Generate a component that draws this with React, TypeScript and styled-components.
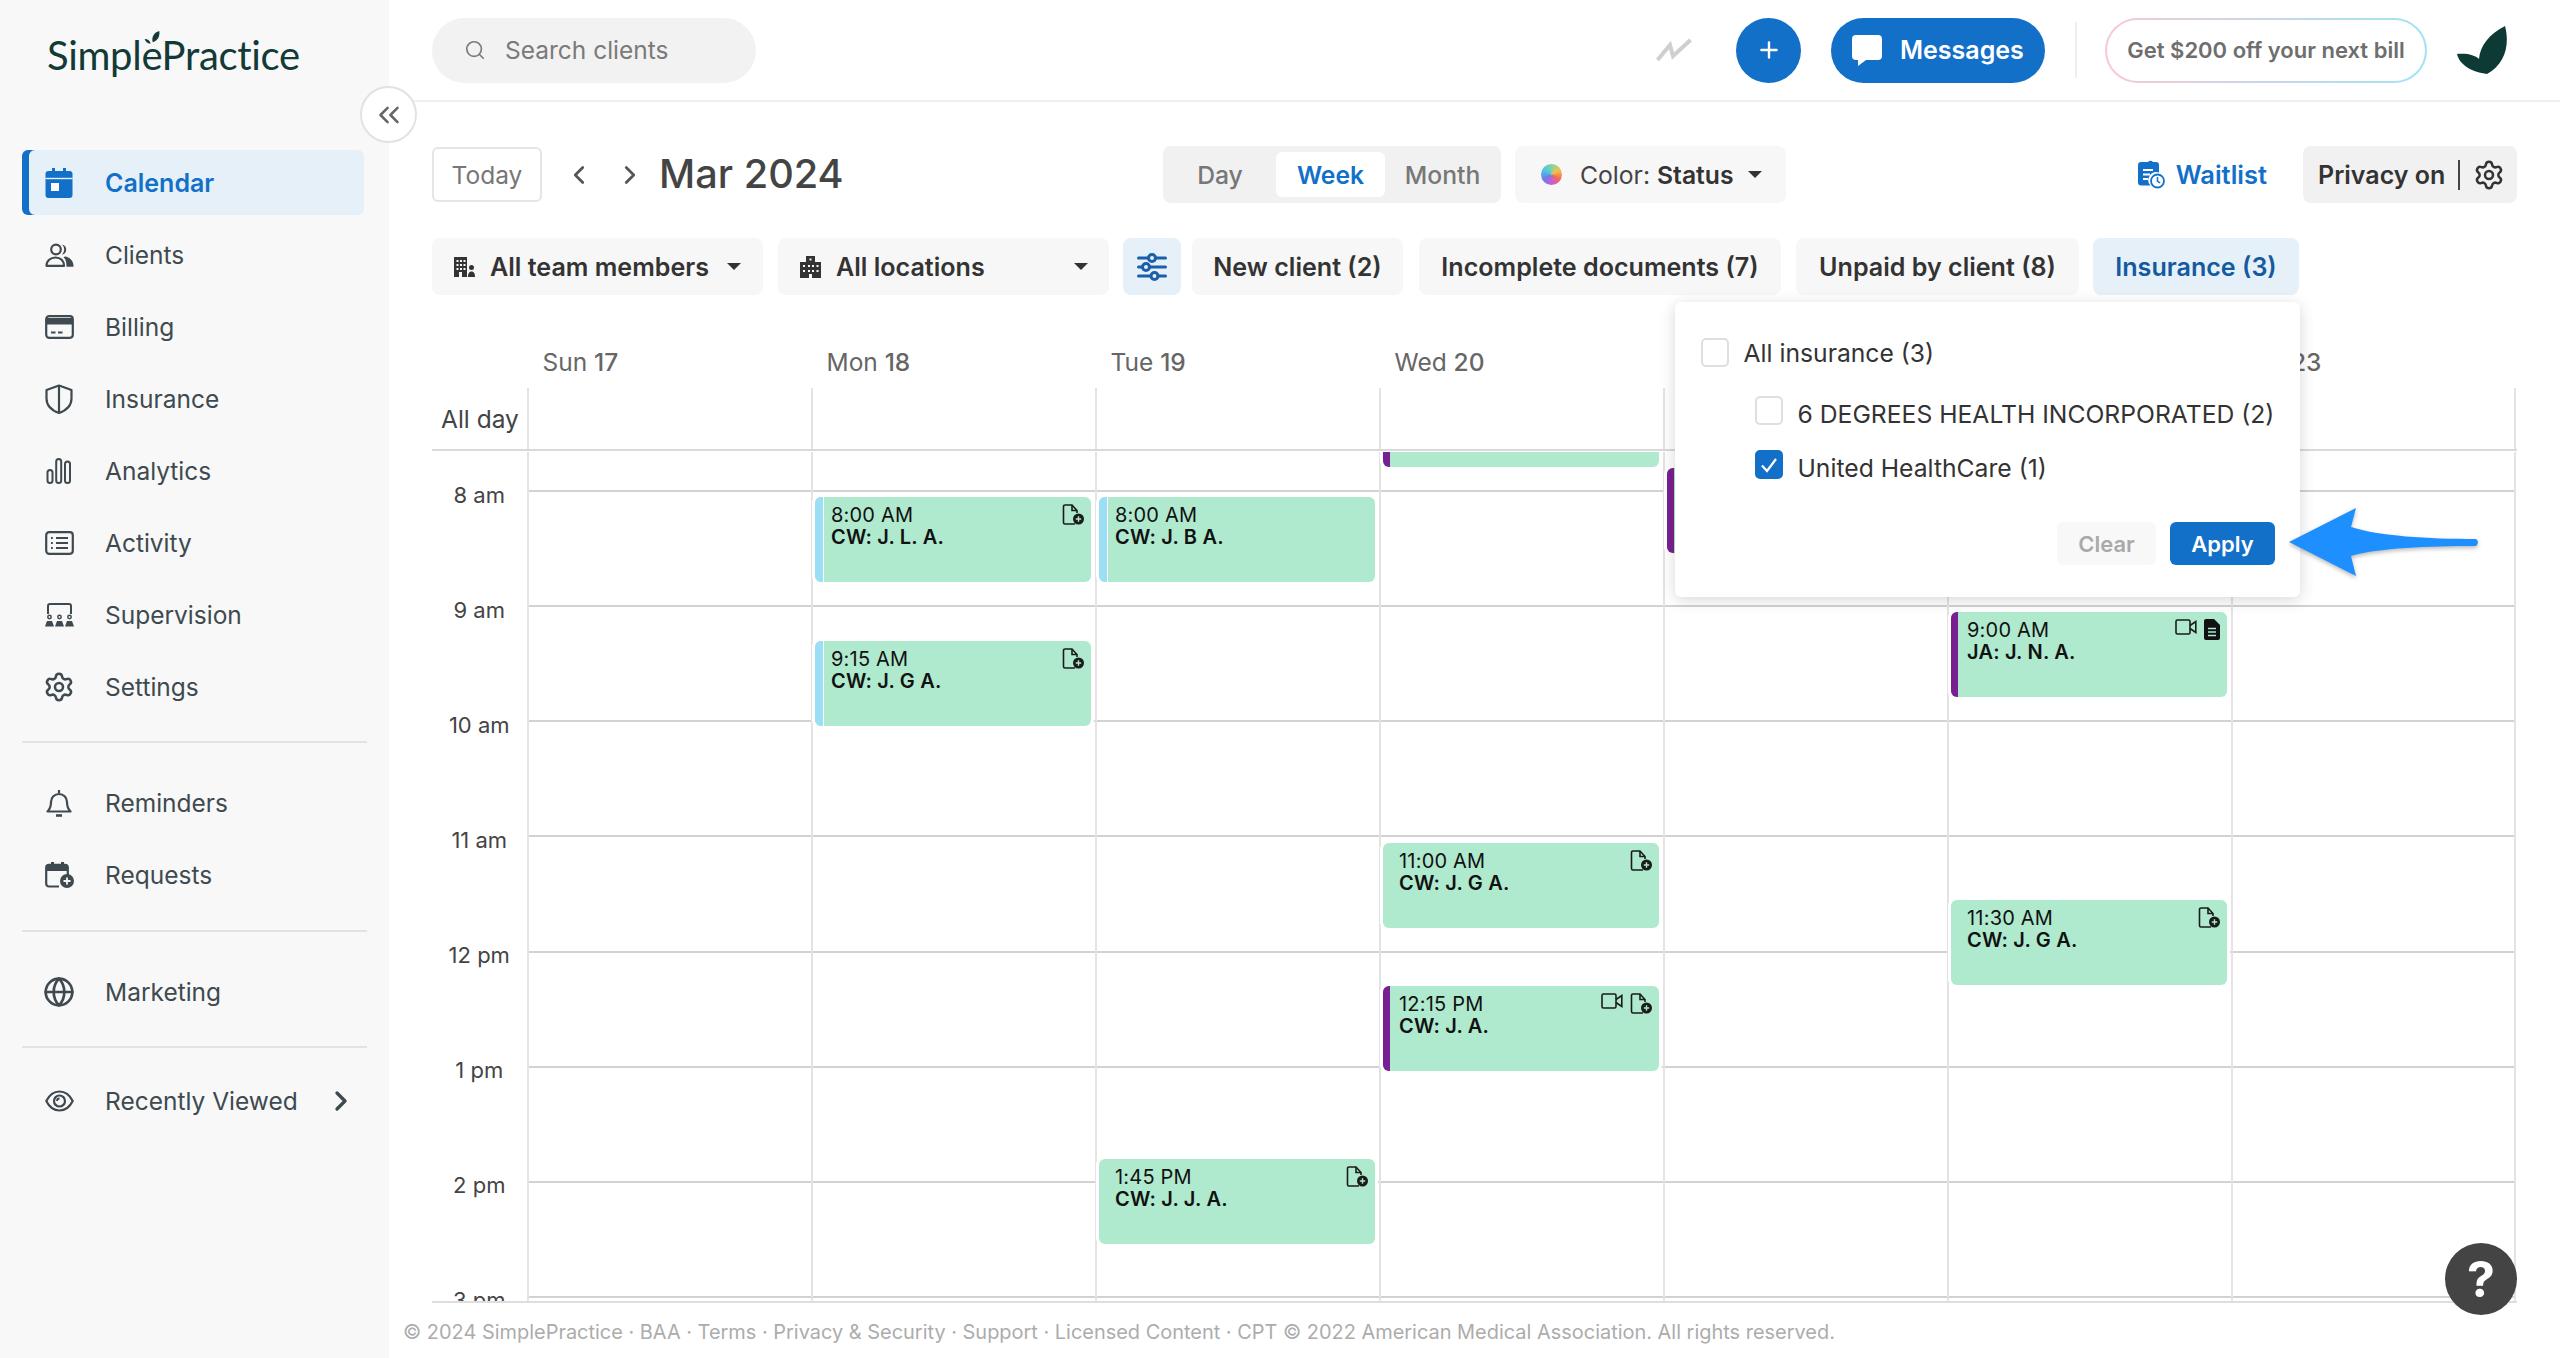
import React from "react";
import styled, { createGlobalStyle } from "styled-components";
import { ChevronLeft, ChevronRight, ChevronsLeft, Globe, Plus, Search, Settings } from "lucide-react";

const GlobalStyle = createGlobalStyle`
  html, body {
    margin: 0;
    padding: 0;
    background: #fff;
    font-family: Inter, "Liberation Sans", sans-serif;
  }
  * { box-sizing: border-box; }
`;

const Page = styled.div`
  display: flex;
  width: 2560px;
  height: 1358px;
  overflow: hidden;
  position: relative;
`;

/* sidebar */
const Sidebar = styled.aside`
  position: relative;
  width: 389px;
  flex: none;
  background: #f8f8f8;
`;
const LogoRow = styled.div`
  height: 150px;
  padding: 28px 0 0 47px;
`;
const LogoText = styled.div`
  position: relative;
  display: inline-block;
  font-family: Lato, sans-serif;
  font-size: 40px;
  line-height: 54px;
  letter-spacing: -0.3px;
  color: #123a36;
`;
const LogoLeaf = styled.svg`
  position: absolute;
  left: 97px;
  top: 3px;
`;
const NavList = styled.nav`
  display: flex;
  flex-direction: column;
  gap: 7px;
  margin-left: 22px;
  width: 342px;
`;
const NavItem = styled.a<{ $active?: boolean }>`
  display: flex;
  align-items: center;
  gap: 32px;
  height: 65px;
  padding-left: 23px;
  border-radius: 6px;
  white-space: nowrap;
  font-size: ${(p) => (p.$active ? "25px" : "24.5px")};
  font-weight: ${(p) => (p.$active ? 600 : 400)};
  color: ${(p) => (p.$active ? "#1370c9" : "#3e4a50")};
  background: ${(p) => (p.$active ? "#e6f0f9" : "transparent")};
  box-shadow: ${(p) => (p.$active ? "inset 7px 0 0 #1370c9" : "none")};
`;
const NavIcon = styled.span`
  width: 28px;
  flex: none;
  display: flex;
  justify-content: center;
  svg { flex: none; }
`;
const NavDivider = styled.hr<{ $after?: number }>`
  width: 345px;
  height: 2px;
  border: 0;
  margin: 22px 0 ${(p) => p.$after ?? 27.5}px 22px;
  background: #e3e3e3;
`;
const NavChevron = styled.span`
  display: flex;
  margin-left: -5px;
`;
const CollapseButton = styled.button`
  position: absolute;
  left: 360px;
  top: 86px;
  z-index: 3;
  width: 57px;
  height: 57px;
  padding: 0;
  display: flex;
  align-items: center;
  justify-content: center;
  border-radius: 50%;
  border: 2px solid #e2e2e2;
  background: #fff;
  color: #666;
`;

/* main */
const Main = styled.main`
  position: relative;
  flex: 1;
  min-width: 0;
  display: flex;
  flex-direction: column;
`;
const TopBar = styled.header`
  height: 102px;
  flex: none;
  display: flex;
  align-items: center;
  gap: 30px;
  padding: 0 51px 0 43px;
  border-bottom: 2px solid #f0f0f0;
`;
const SearchPill = styled.div`
  width: 324px;
  height: 65px;
  display: flex;
  align-items: center;
  gap: 19px;
  padding-left: 32px;
  margin-right: auto;
  border-radius: 33px;
  background: #f2f2f2;
  color: #7a7a7a;
  font-size: 24.5px;
`;
const TrendIcon = styled.svg`
  margin-right: 14px;
`;
const RoundAdd = styled.button`
  width: 65px;
  height: 65px;
  padding: 0;
  display: flex;
  align-items: center;
  justify-content: center;
  border: 0;
  border-radius: 50%;
  background: #1370c9;
  color: #fff;
`;
const MessagesButton = styled.button`
  width: 214px;
  height: 65px;
  display: flex;
  align-items: center;
  gap: 18px;
  padding: 0 0 0 21px;
  border: 0;
  border-radius: 33px;
  background: #1370c9;
  color: #fff;
  font: 600 25px Inter, sans-serif;
`;
const TopDivider = styled.span`
  width: 2px;
  height: 56px;
  margin-right: -2px;
  background: #efefef;
`;
const PromoButton = styled.button`
  width: 322px;
  height: 65px;
  padding: 0;
  border: 2px solid transparent;
  border-radius: 33px;
  background: linear-gradient(#fff, #fff) padding-box,
    linear-gradient(90deg, #f7c9d2, #c9d6e8 50%, #9fe3f5) border-box;
  color: #6e6e6e;
  font: 600 22px Inter, sans-serif;
`;

const Content = styled.div`
  flex: 1;
  min-height: 0;
  display: flex;
  flex-direction: column;
  padding: 44px 43px 0;
`;
const DateToolbar = styled.div`
  display: flex;
  align-items: center;
  height: 57px;
`;
const DateNav = styled.div`
  width: 731px;
  display: flex;
  align-items: center;
  flex: none;
`;
const TodayButton = styled.button`
  width: 110px;
  height: 55px;
  padding: 0;
  border: 2px solid #e5e5e5;
  border-radius: 6px;
  background: #fff;
  color: #777;
  font: 400 24.5px Inter, sans-serif;
`;
const ArrowBox = styled.span`
  width: 51px;
  display: flex;
  justify-content: center;
  color: #555;
  &:first-of-type { margin-left: 11px; }
`;
const MonthTitle = styled.h1`
  margin: 0 0 0 4px;
  font-size: 39.7px;
  font-weight: 500;
  color: #444;
  line-height: 57px;
`;
const Segment = styled.div`
  width: 338px;
  height: 57px;
  display: flex;
  gap: 5px;
  padding: 6px;
  border-radius: 8px;
  background: #f1f1f1;
`;
const SegmentTab = styled.span<{ $on?: boolean; $w: number }>`
  width: ${(p) => p.$w}px;
  display: flex;
  align-items: center;
  justify-content: center;
  border-radius: 6px;
  font-size: 24.7px;
  font-weight: ${(p) => (p.$on ? 600 : 500)};
  color: ${(p) => (p.$on ? "#1370c9" : "#777")};
  background: ${(p) => (p.$on ? "#fff" : "transparent")};
`;
const ColorButton = styled.div`
  width: 271px;
  height: 57px;
  margin-left: 14px;
  display: flex;
  align-items: center;
  padding-left: 26px;
  border-radius: 8px;
  background: #f7f7f7;
  font-size: 24.7px;
  color: #444;
  b { font-weight: 600; margin-left: 7px; color: #333; }
`;
const ColorWheel = styled.span`
  width: 21px;
  height: 21px;
  margin-right: 18px;
  border-radius: 50%;
  background: conic-gradient(#7fd4a0, #f4c04e, #ef6a5a, #c45fd6, #6b7fe6, #4cc4e8, #7fd4a0);
`;
const Caret = styled.span<{ $left?: number }>`
  margin-left: ${(p) => p.$left ?? 16}px;
  width: 0;
  height: 0;
  border-left: 7px solid transparent;
  border-right: 7px solid transparent;
  border-top: 7px solid #333;
`;
const WaitlistLink = styled.a`
  margin-left: auto;
  display: flex;
  align-items: center;
  gap: 11px;
  color: #1370c9;
  font-size: 25.5px;
  font-weight: 600;
`;
const PrivacyBox = styled.div`
  width: 214px;
  height: 57px;
  margin-left: 36px;
  display: flex;
  align-items: center;
  padding-left: 15px;
  border-radius: 8px;
  background: #f1f1f1;
  color: #333;
  font-size: 25px;
  font-weight: 600;
  i {
    width: 2px;
    height: 30px;
    margin: 0 13px;
    background: #444;
  }
`;

const FilterRow = styled.div`
  display: flex;
  align-items: center;
  height: 57px;
  margin-top: 35px;
`;
const FilterChip = styled.div<{ $w: number; $on?: boolean; $ml?: number }>`
  width: ${(p) => p.$w}px;
  height: 57px;
  flex: none;
  margin-left: ${(p) => p.$ml ?? 15}px;
  display: flex;
  align-items: center;
  justify-content: center;
  border-radius: 8px;
  font-size: 25.1px;
  font-weight: 600;
  color: ${(p) => (p.$on ? "#145a9e" : "#333")};
  background: ${(p) => (p.$on ? "#e6f0f9" : "#f7f7f7")};
  &:first-child { margin-left: 0; }
`;
const DropdownChip = styled(FilterChip)`
  justify-content: flex-start;
  padding-left: 22px;
  gap: 15px;
`;

/* calendar */
const calendarColumns = "94.5px repeat(6, 284px) 285.5px";
const DayHeader = styled.div`
  display: grid;
  grid-template-columns: ${calendarColumns};
  height: 43px;
  margin-top: 50px;
  padding-top: 1px;
`;
const DayName = styled.div`
  padding-left: 16px;
  font-size: 24.5px;
  line-height: 32px;
  color: #666;
  b { font-weight: 500; }
`;
const AllDayRow = styled.div`
  display: grid;
  grid-template-columns: ${calendarColumns};
  height: 63px;
  border-bottom: 2px solid #d9d9d9;
`;
const AllDayLabel = styled.div`
  padding: 15px 0 0 9px;
  font-size: 24.5px;
  line-height: 32px;
  color: #444;
`;
const AllDayCell = styled.div`
  border-left: 2px solid #e3e3e3;
  &:last-child { border-right: 2px solid #e3e3e3; }
`;
const CalendarBody = styled.div`
  display: grid;
  grid-template-columns: ${calendarColumns};
  height: 851px;
  margin-top: 1px;
  overflow: hidden;
  border-bottom: 2px solid #dedede;
`;
const Gutter = styled.div`
  display: flex;
  flex-direction: column;
  padding-top: 29.5px;
`;
const HourLabel = styled.div`
  height: 115.14px;
  flex: none;
  text-align: center;
  font-size: 22px;
  line-height: 26px;
  color: #444;
`;
const DayColumn = styled.div`
  position: relative;
  display: flex;
  flex-direction: column;
  border-left: 2px solid #e3e3e3;
  &:last-child { border-right: 2px solid #e3e3e3; }
`;
const HourCell = styled.div<{ $first?: boolean }>`
  height: ${(p) => (p.$first ? "40px" : "115.14px")};
  flex: none;
  border-bottom: 2px solid #d2d2d2;
`;
const EventCard = styled.div<{ $top: number }>`
  position: absolute;
  left: 2.5px;
  top: ${(p) => p.$top}px;
  width: 276px;
  height: 85px;
  padding: 7px 0 0 16px;
  overflow: hidden;
  border-radius: 6px;
  background: #afe9ce;
  box-shadow: 0 0 0 3px #fff;
  font-size: 20px;
  line-height: 22px;
  letter-spacing: 0.2px;
  color: #111;
  b { display: block; font-weight: 600; }
`;
const EventStripe = styled.span<{ $kind: "blue" | "purple" }>`
  position: absolute;
  left: 0;
  top: 0;
  bottom: 0;
  width: ${(p) => (p.$kind === "blue" ? "9px" : "7px")};
  background: ${(p) => (p.$kind === "blue" ? "#9bdff7" : "#7a1f91")};
  border-right: ${(p) => (p.$kind === "blue" ? "1px solid #fff" : "0")};
`;
const EventIcons = styled.span`
  position: absolute;
  top: 7px;
  right: 7px;
  display: flex;
  align-items: flex-start;
  gap: 7px;
`;

const Footer = styled.footer`
  margin: 17px 0 0 -29px;
  font-size: 19.95px;
  line-height: 24px;
  color: #acacac;
  white-space: nowrap;
`;

/* overlays */
const Popover = styled.div`
  position: absolute;
  left: 1286px;
  top: 302px;
  z-index: 4;
  width: 625px;
  height: 295px;
  padding: 36px 25px 32px 25.5px;
  display: flex;
  flex-direction: column;
  border-radius: 6px;
  background: #fff;
  box-shadow: 0 3px 16px rgba(0, 0, 0, 0.16);
`;
const CheckRow = styled.label<{ $indent?: boolean; $mt?: number }>`
  display: flex;
  align-items: center;
  gap: 15px;
  height: 29px;
  margin-top: ${(p) => p.$mt ?? 0}px;
  margin-left: ${(p) => (p.$indent ? "54px" : "0")};
  font-size: 24.7px;
  color: #333;
  white-space: nowrap;
`;
const CheckText = styled.span<{ $drop?: boolean }>`
  padding-top: ${(p) => (p.$drop ? "7px" : "0")};
`;
const CheckBox = styled.span<{ $on?: boolean }>`
  width: 28px;
  height: 29px;
  flex: none;
  display: flex;
  align-items: center;
  justify-content: center;
  border-radius: 5px;
  border: 2px solid ${(p) => (p.$on ? "#1370c9" : "#dfdfdf")};
  background: ${(p) => (p.$on ? "#1370c9" : "#fff")};
`;
const PopoverActions = styled.div`
  display: flex;
  justify-content: flex-end;
  gap: 14px;
  margin-top: 43px;
`;
const ClearButton = styled.button`
  width: 99px;
  height: 43px;
  padding: 0;
  border: 0;
  border-radius: 6px;
  background: #f8f8f8;
  color: #a9a9a9;
  font: 600 22px Inter, sans-serif;
`;
const ApplyButton = styled.button`
  width: 105px;
  height: 43px;
  padding: 0;
  border: 0;
  border-radius: 6px;
  background: #1370c9;
  color: #fff;
  font: 600 22px Inter, sans-serif;
`;
const CalloutArrow = styled.svg`
  position: absolute;
  left: 1899px;
  top: 507px;
  z-index: 5;
  filter: drop-shadow(0 2px 2px rgba(0, 0, 0, 0.28));
`;
const HelpButton = styled.button`
  position: absolute;
  left: 2056px;
  top: 1243px;
  z-index: 5;
  width: 72px;
  height: 72px;
  padding: 0;
  border: 0;
  border-radius: 50%;
  background: #444;
  color: #fff;
  font: 700 50px Inter, sans-serif;
`;

const CalendarIcon = () => (
  <svg width="28" height="30" viewBox="0 0 28 30" fill="none">
    <path d="M7 0h3v3h8V0h3v3h3.5A3 3 0 0 1 27.5 6v21a3 3 0 0 1-3 3h-21a3 3 0 0 1-3-3V6a3 3 0 0 1 3-3H7z" fill="currentColor" />
    <path d="M0.5 10.5h27" stroke="#e6f0f9" strokeWidth="1.4" />
    <rect x="6" y="15" width="8" height="8" fill="#fff" />
  </svg>
);
const ClientsIcon = () => (
  <svg width="29" height="24" viewBox="0 0 29 24" fill="none" stroke="currentColor" strokeWidth="2.2">
    <circle cx="11" cy="6.5" r="4.8" />
    <path d="M1.5 22.8c0-5 4-8.3 9-8.3s8.6 3.3 8.6 8.3z" strokeLinejoin="round" />
    <path d="M17 1.5a5.2 5.2 0 0 1 0 10.2 7 7 0 0 0 0-10.2z" fill="currentColor" stroke="none" />
    <path d="M20 13.5c4.5.5 8.5 4 8.5 9.5v.8h-7c0-4-.5-7.3-3-9.5z" fill="currentColor" stroke="none" />
  </svg>
);
const BillingIcon = () => (
  <svg width="29" height="24" viewBox="0 0 29 24" fill="none" stroke="currentColor" strokeWidth="2.2">
    <rect x="1.2" y="1.2" width="26.6" height="21.6" rx="3" />
    <rect x="1.2" y="3" width="26.6" height="6.5" fill="currentColor" stroke="none" />
    <path d="M6 17.5h4.5M13 17.5h4.5" strokeWidth="2" />
  </svg>
);
const ShieldIcon = () => (
  <svg width="28" height="30" viewBox="0 0 28 30" fill="none" stroke="currentColor" strokeWidth="2.2" strokeLinejoin="round">
    <path d="M14 1.5 26.5 6v8.5c0 6.8-5 11.8-12.5 14.5C6.5 26.3 1.5 21.3 1.5 14.5V6z" />
    <path d="M14 1.5V29" />
  </svg>
);
const AnalyticsIcon = () => (
  <svg width="26" height="26" viewBox="0 0 26 26" fill="none" stroke="currentColor" strokeWidth="2">
    <rect x="1.5" y="12" width="5" height="13" rx="2.5" />
    <rect x="10.2" y="1" width="5" height="24" rx="2.5" />
    <rect x="19" y="3.5" width="5" height="21.5" rx="2.5" />
  </svg>
);
const ActivityIcon = () => (
  <svg width="29" height="24" viewBox="0 0 29 24" fill="none" stroke="currentColor" strokeWidth="2.2">
    <rect x="1.2" y="1.2" width="26.6" height="21.6" rx="3" />
    <path d="M11 7h12M11 12h12M11 17h12" strokeWidth="2" />
    <path d="M6 7h1.8M6 12h1.8M6 17h1.8" strokeWidth="2" />
  </svg>
);
const SupervisionIcon = () => (
  <svg width="29" height="24" viewBox="0 0 29 24" fill="none" stroke="currentColor" strokeWidth="2">
    <path d="M3 11V3a2 2 0 0 1 2-2h19a2 2 0 0 1 2 2v8" />
    <circle cx="4.5" cy="14" r="1.7" strokeWidth="1.5" />
    <circle cx="14.5" cy="14" r="1.7" strokeWidth="1.5" />
    <circle cx="24.5" cy="14" r="1.7" strokeWidth="1.5" />
    <path d="M0 23.5 2 18h5l2 5.5zM10 23.5l2-5.5h5l2 5.5zM20 23.5l2-5.5h5l2 5.5z" fill="currentColor" stroke="none" />
  </svg>
);
const BellIcon = () => (
  <svg width="26" height="28" viewBox="0 0 26 28" fill="none" stroke="currentColor" strokeWidth="2.2" strokeLinejoin="round">
    <path d="M13 1v3" />
    <path d="M5 13a8 8 0 0 1 16 0c0 5 1.5 7.5 3.5 9.5h-23C3.5 20.5 5 18 5 13z" />
    <path d="M10 26.5h6" strokeWidth="2.6" />
  </svg>
);
const RequestsIcon = () => (
  <svg width="29" height="26" viewBox="0 0 29 26" fill="none" stroke="currentColor" strokeWidth="2.2">
    <path d="M14 24.5H4a2.8 2.8 0 0 1-2.8-2.8V5.5A2.8 2.8 0 0 1 4 2.8h16a2.8 2.8 0 0 1 2.8 2.8v8" />
    <path d="M1 3h22v6H1zM6 0h3v3H6zM16 0h3v3h-3z" fill="currentColor" stroke="none" />
    <circle cx="22" cy="19" r="7" fill="currentColor" stroke="none" />
    <path d="M22 15.5v7M18.5 19h7" stroke="#f8f8f8" strokeWidth="1.8" />
  </svg>
);
const EyeIcon = () => (
  <svg width="29" height="22" viewBox="0 0 29 22" fill="none" stroke="currentColor" strokeWidth="2.2">
    <path d="M1.3 11C4.5 4.5 9 1.5 14.5 1.5S24.5 4.5 27.7 11C24.5 17.5 20 20.5 14.5 20.5S4.5 17.5 1.3 11z" />
    <circle cx="14.5" cy="11" r="5.5" />
    <path d="M12 11a2.5 2.5 0 0 1 2.5-2.5" strokeWidth="1.8" />
  </svg>
);
const MessageIcon = () => (
  <svg width="30" height="31" viewBox="0 0 30 31" fill="#fff">
    <path d="M4 0h22a4 4 0 0 1 4 4v17a4 4 0 0 1-4 4H14l-8 6v-6H4a4 4 0 0 1-4-4V4a4 4 0 0 1 4-4z" />
  </svg>
);
const BrandMark = () => (
  <svg width="52" height="48" viewBox="0 0 52 48" fill="#0e3a36">
    <path d="M48 0C53 19 48 38 30 48 16 46 3 40 0 28c10-1 18 1 22 5C23 20 32 8 48 0z" />
  </svg>
);
const TeamIcon = () => (
  <svg width="21" height="20" viewBox="0 0 21 20">
    <path d="M0 0h13v20H0z" fill="#333" />
    <path d="M2.5 3h2v2h-2zM6 3h2v2H6zM9.5 3h2v2h-2zM2.5 7h2v2h-2zM6 7h2v2H6zM9.5 7h2v2h-2zM2.5 11h2v2h-2zM6 11h2v2H6zM9.5 11h2v2h-2zM5 15h3v5H5z" fill="#f7f7f7" />
    <circle cx="17.5" cy="10.5" r="2.5" fill="#333" />
    <path d="M14 20c0-4 1.5-5.500 3.500-5.500S21 16 21 20z" fill="#333" />
  </svg>
);
const LocationIcon = () => (
  <svg width="21" height="22" viewBox="0 0 21 22">
    <path d="M6 6V0h9v6h6v16H0V6z" fill="#333" />
    <path d="M9.5 2.5h2v2h-2zM3 9h2v2H3zM8 9h2v2H8zM12 9h2v2h-2zM16.5 9h2v2h-2zM3 14h2v2H3zM8 14h2v2H8zM12 14h2v2h-2zM16.5 14h2v2h-2zM9 18h3v4H9z" fill="#f7f7f7" />
  </svg>
);
const SlidersIcon = () => (
  <svg width="30" height="28" viewBox="0 0 30 28" fill="none" stroke="#1a5fa8" strokeWidth="3" strokeLinecap="round">
    <path d="M1.5 5h10M19 5h9.5M1.5 14h4M12.5 14h16M1.5 23h12M21 23h7.5" />
    <circle cx="15" cy="5" r="3.5" />
    <circle cx="9" cy="14" r="3.5" />
    <circle cx="17.5" cy="23" r="3.5" />
  </svg>
);
const WaitlistIcon = () => (
  <svg width="27" height="29" viewBox="0 0 27 29">
    <path d="M8 2h2a3 3 0 0 1 5 0h3a3 3 0 0 1 3 3v7.5a8 8 0 0 0-8.500 13H3a3 3 0 0 1-3-3V5a3 3 0 0 1 3-3z" fill="#1370c9" />
    <path d="M5 10h10M5 14.5h7M5 19h5" stroke="#fff" strokeWidth="2" />
    <circle cx="19.5" cy="21" r="6.5" fill="#fff" stroke="#1370c9" strokeWidth="1.8" />
    <path d="M19.5 17v4.3l2.6 1.5" fill="none" stroke="#1370c9" strokeWidth="1.5" />
  </svg>
);
const DocPlusIcon = () => (
  <svg width="22" height="21" viewBox="0 0 22 21" fill="none" stroke="#1b1b1b" strokeWidth="1.6">
    <path d="M13 20H3a1.5 1.5 0 0 1-1.5-1.5V2.5A1.5 1.5 0 0 1 3 1h7l5 5.5V9" />
    <path d="M10 1v5.5h5" />
    <circle cx="16.5" cy="15" r="5.5" fill="#1b1b1b" stroke="none" />
    <path d="M16.5 12.3v5.400M13.800 15h5.400" stroke="#afe9ce" strokeWidth="1.4" />
  </svg>
);
const VideoIcon = () => (
  <svg width="22" height="16" viewBox="0 0 22 16" fill="none" stroke="#1b1b1b" strokeWidth="1.6">
    <rect x="1" y="1" width="14" height="14" rx="1.5" />
    <path d="M15 6.5 20.8 2.5v11L15 9.5" />
  </svg>
);
const DocFilledIcon = () => (
  <svg width="16" height="21" viewBox="0 0 16 21">
    <path d="M2 0h8l6 6v13a2 2 0 0 1-2 2H2a2 2 0 0 1-2-2V2a2 2 0 0 1 2-2z" fill="#111" />
    <path d="M4 9.5h8M4 13h8M4 16.5h8" stroke="#afe9ce" strokeWidth="1.5" />
  </svg>
);

type EventItem = {
  hour: number;
  time?: string;
  name?: string;
  stripe?: "blue" | "purple";
  icons?: ("video" | "plus" | "doc")[];
};

// index = column, Sun first
const weekEvents: EventItem[][] = [
  [],
  [
    { time: "8:00 AM", hour: 8, name: "CW: J. L. A.", stripe: "blue", icons: ["plus"] },
    { time: "9:15 AM", hour: 9.25, name: "CW: J. G A.", stripe: "blue", icons: ["plus"] },
  ],
  [
    { time: "8:00 AM", hour: 8, name: "CW: J. B A.", stripe: "blue" },
    { time: "1:45 PM", hour: 13.75, name: "CW: J. J. A.", icons: ["plus"] },
  ],
  [
    { hour: 7, stripe: "purple" },
    { time: "11:00 AM", hour: 11, name: "CW: J. G A.", icons: ["plus"] },
    { time: "12:15 PM", hour: 12.25, name: "CW: J. A.", stripe: "purple", icons: ["video", "plus"] },
  ],
  [{ hour: 7.75, stripe: "purple" }],
  [
    { time: "9:00 AM", hour: 9, name: "JA: J. N. A.", stripe: "purple", icons: ["video", "doc"] },
    { time: "11:30 AM", hour: 11.5, name: "CW: J. G A.", icons: ["plus"] },
  ],
  [],
];

const days: [string, string][] = [
  ["Sun", "17"],
  ["Mon", "18"],
  ["Tue", "19"],
  ["Wed", "20"],
  ["Thu", "21"],
  ["Fri", "22"],
  ["Sat", "23"],
];
const hourLabels = ["8 am", "9 am", "10 am", "11 am", "12 pm", "1 pm", "2 pm", "3 pm"];
const hourCells = Array.from({ length: 8 });

const eventTop = (hour: number) => -76 + (hour - 7) * 115.14 + 6;

const EventIconSet = ({ icons }: { icons: NonNullable<EventItem["icons"]> }) => (
  <EventIcons>
    {icons.map((icon) =>
      icon === "video" ? <VideoIcon key={icon} /> : icon === "doc" ? <DocFilledIcon key={icon} /> : <DocPlusIcon key={icon} />
    )}
  </EventIcons>
);

const App = () => {
  return (
    <Page>
      <GlobalStyle />
      <Sidebar>
        <LogoRow>
          <LogoText>
            SimplePractice
            <LogoLeaf width="16" height="16" viewBox="0 0 24 24" fill="#123a36">
              <path d="M13 17C11 9 15 2 23 0c1 8-2 14-10 17z" />
              <path d="M1 12c5 0 8 3 9 7-5 0-8-3-9-7z" />
            </LogoLeaf>
          </LogoText>
        </LogoRow>
        <NavList>
          <NavItem $active><NavIcon><CalendarIcon /></NavIcon>Calendar</NavItem>
          <NavItem><NavIcon><ClientsIcon /></NavIcon>Clients</NavItem>
          <NavItem><NavIcon><BillingIcon /></NavIcon>Billing</NavItem>
          <NavItem><NavIcon><ShieldIcon /></NavIcon>Insurance</NavItem>
          <NavItem><NavIcon><AnalyticsIcon /></NavIcon>Analytics</NavItem>
          <NavItem><NavIcon><ActivityIcon /></NavIcon>Activity</NavItem>
          <NavItem><NavIcon><SupervisionIcon /></NavIcon>Supervision</NavItem>
          <NavItem><NavIcon><Settings size={32} strokeWidth={1.9} /></NavIcon>Settings</NavItem>
        </NavList>
        <NavDivider />
        <NavList>
          <NavItem><NavIcon><BellIcon /></NavIcon>Reminders</NavItem>
          <NavItem><NavIcon><RequestsIcon /></NavIcon>Requests</NavItem>
        </NavList>
        <NavDivider />
        <NavList>
          <NavItem><NavIcon><Globe size={32} strokeWidth={2} /></NavIcon>Marketing</NavItem>
        </NavList>
        <NavDivider $after={20} />
        <NavList>
          <NavItem>
            <NavIcon><EyeIcon /></NavIcon>
            Recently Viewed
            <NavChevron><ChevronRight size={32} strokeWidth={2.5} /></NavChevron>
          </NavItem>
        </NavList>
        <CollapseButton><ChevronsLeft size={34} strokeWidth={1.8} /></CollapseButton>
      </Sidebar>

      <Main>
        <TopBar>
          <SearchPill><Search size={22} strokeWidth={1.8} />Search clients</SearchPill>
          <TrendIcon width="36" height="24" viewBox="0 0 36 24" fill="none" stroke="#cfcfcf" strokeWidth="4">
            <path d="M1.5 22 14 7l3 11L34.5 2" />
          </TrendIcon>
          <RoundAdd><Plus size={26} strokeWidth={2.2} /></RoundAdd>
          <MessagesButton><MessageIcon />Messages</MessagesButton>
          <TopDivider />
          <PromoButton>Get $200 off your next bill</PromoButton>
          <BrandMark />
        </TopBar>

        <Content>
          <DateToolbar>
            <DateNav>
              <TodayButton>Today</TodayButton>
              <ArrowBox><ChevronLeft size={30} strokeWidth={2.2} /></ArrowBox>
              <ArrowBox><ChevronRight size={30} strokeWidth={2.2} /></ArrowBox>
              <MonthTitle>Mar 2024</MonthTitle>
            </DateNav>
            <Segment>
              <SegmentTab $w={102}>Day</SegmentTab>
              <SegmentTab $on $w={109}>Week</SegmentTab>
              <SegmentTab $w={105}>Month</SegmentTab>
            </Segment>
            <ColorButton>
              <ColorWheel />
              Color:<b>Status</b>
              <Caret $left={14} />
            </ColorButton>
            <WaitlistLink><WaitlistIcon />Waitlist</WaitlistLink>
            <PrivacyBox>
              Privacy on<i />
              <Settings size={32} strokeWidth={1.9} />
            </PrivacyBox>
          </DateToolbar>

          <FilterRow>
            <DropdownChip $w={331}>
              <TeamIcon />
              All team members
              <Caret $left={3} />
            </DropdownChip>
            <DropdownChip $w={331}>
              <LocationIcon />
              All locations
              <Caret $left={74} />
            </DropdownChip>
            <FilterChip $w={58} $on $ml={14}><SlidersIcon /></FilterChip>
            <FilterChip $w={211} $ml={11}>New client (2)</FilterChip>
            <FilterChip $w={362} $ml={16}>Incomplete documents (7)</FilterChip>
            <FilterChip $w={283}>Unpaid by client (8)</FilterChip>
            <FilterChip $w={206} $on $ml={14}>Insurance (3)</FilterChip>
          </FilterRow>

          <DayHeader>
            <div />
            {days.map(([name, date]) => (
              <DayName key={name}>{name} <b>{date}</b></DayName>
            ))}
          </DayHeader>
          <AllDayRow>
            <AllDayLabel>All day</AllDayLabel>
            {days.map(([name]) => <AllDayCell key={name} />)}
          </AllDayRow>
          <CalendarBody>
            <Gutter>
              {hourLabels.map((label) => <HourLabel key={label}>{label}</HourLabel>)}
            </Gutter>
            {weekEvents.map((events, col) => (
              <DayColumn key={col}>
                {hourCells.map((_, i) => <HourCell key={i} $first={i === 0} />)}
                {events.map((ev) => (
                  <EventCard key={ev.hour} $top={eventTop(ev.hour)}>
                    {ev.stripe && <EventStripe $kind={ev.stripe} />}
                    {ev.time}
                    {ev.name && <b>{ev.name}</b>}
                    {ev.icons && <EventIconSet icons={ev.icons} />}
                  </EventCard>
                ))}
              </DayColumn>
            ))}
          </CalendarBody>
          <Footer>
            © 2024 SimplePractice · BAA · Terms · Privacy &amp; Security · Support · Licensed Content · CPT © 2022 American Medical Association. All rights reserved.
          </Footer>
        </Content>

        <Popover>
          <CheckRow><CheckBox /><CheckText>All insurance (3)</CheckText></CheckRow>
          <CheckRow $indent $mt={29}><CheckBox /><CheckText $drop>6 DEGREES HEALTH INCORPORATED (2)</CheckText></CheckRow>
          <CheckRow $indent $mt={25}>
            <CheckBox $on>
              <svg width="18" height="16" viewBox="0 0 18 16" fill="none" stroke="#fff" strokeWidth="2.2">
                <path d="M2 8.5 7 14 16 2" />
              </svg>
            </CheckBox>
            <CheckText $drop>United HealthCare (1)</CheckText>
          </CheckRow>
          <PopoverActions>
            <ClearButton>Clear</ClearButton>
            <ApplyButton>Apply</ApplyButton>
          </PopoverActions>
        </Popover>
        <CalloutArrow width="195" height="72" viewBox="0 0 195 72" fill="#1e8fff">
          <path d="M1 35 68 1 63 20C90 29 140 32 188 32q4 3 0 7C140 39 90 41 63 49l5 20z" />
        </CalloutArrow>
        <HelpButton>?</HelpButton>
      </Main>
    </Page>
  );
};

export default App;
